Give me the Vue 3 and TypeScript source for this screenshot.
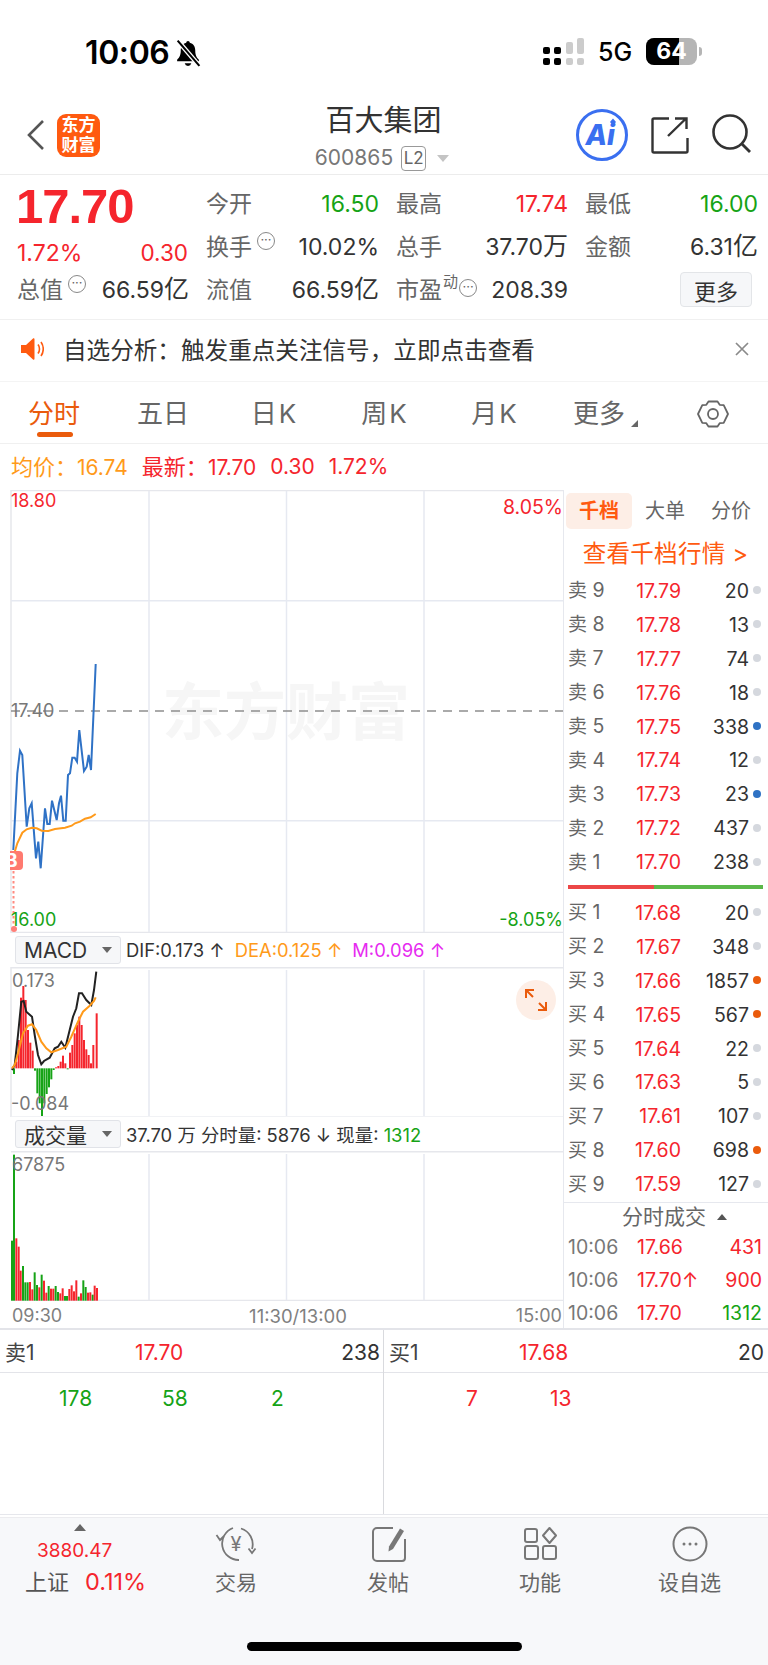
<script setup lang="ts">
const RED = '#f5252d'
const GREEN = '#16a316'

const toLine = (pts: number[][], ox: number, oy: number): string =>
  pts.map(([x, y]) => `${(ox + x / 3).toFixed(1)},${(oy + y / 3).toFixed(1)}`).join(' ')

const priceLine = toLine([[40,1110],[52,880],[60,812],[67,825],[80,1040],[88,985],[95,970],[108,1135],[115,1085],[122,1165],[135,985],[142,1032],[149,1032],[156,962],[170,1020],[177,970],[183,947],[190,1022],[197,1022],[204,885],[210,880],[217,833],[224,833],[231,845],[238,750],[252,873],[260,860],[266,825],[273,870],[287,552]], 0, 480)
const avgLine = toLine([[40,1130],[52,1090],[67,1058],[80,1048],[95,1043],[110,1045],[125,1052],[145,1053],[165,1047],[195,1043],[215,1037],[225,1030],[240,1025],[255,1016],[272,1012],[287,1002]], 0, 480)
const difLine = toLine([[12,315],[20,300],[30,210],[40,110],[47,108],[55,140],[72,155],[80,210],[90,270],[100,298],[108,288],[125,278],[140,250],[150,245],[160,230],[172,248],[185,195],[195,155],[205,130],[213,85],[222,85],[235,105],[250,120],[258,75],[265,20]], 8, 965)
const deaLine = toLine([[12,310],[20,300],[30,265],[45,205],[60,182],[72,178],[85,195],[100,230],[115,250],[130,262],[150,255],[175,245],[190,215],[210,170],[225,140],[245,122],[258,108],[263,97]], 8, 965)

// MACD bars: [x in 3x crop, y of the tip in 3x crop]; 415 is the zero line.
const macdRaw: number[][] = [[42,432],[49,395],[56,330],[63,203],[70,168],[77,210],[84,300],[91,338],[98,362],[105,422],[112,490],[119,520],[126,558],[133,520],[140,492],[147,472],[154,448],[161,420],[168,412],[175,408],[182,395],[189,377],[196,400],[203,418],[210,368],[217,345],[224,310],[231,285],[238,260],[245,285],[252,330],[259,358],[266,375],[273,400],[280,345],[290,250]]
const macdBars = macdRaw.map(([x, y]) => {
  const base = 930 + 415 / 3
  const tip = 930 + y / 3
  return { x: x / 3 - 1, y: Math.min(base, tip), h: Math.abs(tip - base), c: y > 415 ? GREEN : RED }
})

// Volume bars: [x, top, 1 for green] in the 3x crop at (8,1150); 452 is the floor.
const volRaw: number[][] = [[12,272,1],[18,14,1],[25,265,0],[32,290,0],[38,362,0],[45,348,1],[52,397,1],[59,397,1],[66,396,0],[73,418,0],[80,367,1],[87,405,1],[94,412,0],[101,374,1],[108,392,0],[115,428,0],[122,408,1],[129,416,0],[136,416,0],[143,408,1],[150,426,1],[157,430,0],[164,415,0],[171,438,1],[177,438,1],[184,417,0],[191,406,0],[198,424,0],[205,391,0],[212,440,1],[219,430,0],[226,391,1],[233,411,1],[240,428,0],[247,427,0],[254,434,1],[260,407,0],[267,414,0]]
const volBars = volRaw.map(([x, y, g]) => ({
  x: 8 + x / 3 - 1,
  y: 1150 + y / 3,
  h: (452 - y) / 3,
  c: g ? GREEN : RED,
}))

const gridX = [149, 286.5, 424]
const quoteRows = [
  [
    { label: '今开', value: '16.50', unit: '', color: 'green' },
    { label: '最高', value: '17.74', unit: '', color: 'red' },
    { label: '最低', value: '16.00', unit: '', color: 'green' },
  ],
  [
    { label: '换手', value: '10.02%', unit: '', color: '', dots: true },
    { label: '总手', value: '37.70', unit: '万', color: '' },
    { label: '金额', value: '6.31', unit: '亿', color: '' },
  ],
]
const tabs = ['五日', '日K', '周K', '月K']

interface Level { name: string; n: string; price: string; qty: string; dot: string }
const dotOf = (k: string): string => (k === 'b' ? 'blue' : k === 'o' ? 'orange' : 'gray')
const mk = (name: string, raw: [string, string, string, string][]): Level[] =>
  raw.map(([n, price, qty, d]) => ({ name, n, price, qty, dot: dotOf(d) }))
const sells = mk('卖', [['9','17.79','20','g'],['8','17.78','13','g'],['7','17.77','74','g'],['6','17.76','18','g'],['5','17.75','338','b'],['4','17.74','12','g'],['3','17.73','23','b'],['2','17.72','437','g'],['1','17.70','238','g']])
const buys = mk('买', [['1','17.68','20','g'],['2','17.67','348','g'],['3','17.66','1857','o'],['4','17.65','567','o'],['5','17.64','22','g'],['6','17.63','5','g'],['7','17.61','107','g'],['8','17.60','698','o'],['9','17.59','127','g']])
const trades = [
  { p: '17.66', q: '431', c: 'red' },
  { p: '17.70↑', q: '900', c: 'red' },
  { p: '17.70', q: '1312', c: 'green' },
]
</script>

<template>
  <div class="page">
    <div class="status">
      <div class="time-wrap">
        <span class="time">10:06</span>
        <svg class="bell" width="28" height="29" viewBox="0 0 26 28">
          <path d="M13 2c-1 0-1.600.7-1.700 1.600C7.800 4.500 6 7.400 6 11c0 4.500-1.200 6.500-3.500 9v1.500h21V20C21.200 17.500 20 15.500 20 11c0-3.600-1.800-6.500-5.300-7.400C14.600 2.700 14 2 13 2z" fill="#000" />
          <path d="M9.800 23.500a3.300 3.300 0 0 0 6.400 0z" fill="#000" />
          <path d="M3 1.500 L24 26" stroke="#fff" stroke-width="4.500" />
          <path d="M3 1.500 L24 26" stroke="#000" stroke-width="2" />
        </svg>
      </div>
      <div class="status-right">
        <div class="signal">
          <div class="sig-col"><i class="s1 on"></i><i class="s2 on"></i></div>
          <div class="sig-col"><i class="s1 on"></i><i class="s2 on"></i></div>
          <div class="sig-col"><i class="s3"></i><i class="s2"></i></div>
          <div class="sig-col"><i class="s4"></i><i class="s2"></i></div>
        </div>
        <span class="net">5G</span>
        <div class="battery"><span class="batt-level"></span><span class="batt-num">64</span></div>
        <i class="batt-tip"></i>
      </div>
    </div>

    <header class="nav">
      <div class="nav-left">
        <svg width="20" height="32" viewBox="0 0 20 32"><path d="M17 2 3 16l14 14" fill="none" stroke="#555" stroke-width="2.600" /></svg>
        <div class="logo"><span>东方</span><span>财富</span></div>
      </div>
      <div class="nav-title">
        <div class="title">百大集团</div>
        <div class="code"><span>600865</span><span class="l2">L2</span><i class="code-tri"></i></div>
      </div>
      <div class="nav-right">
        <svg class="ai" width="54" height="54" viewBox="0 0 54 54">
          <circle cx="27" cy="27" r="24.500" fill="none" stroke="#3a6ff0" stroke-width="3" />
          <text x="10.500" y="37" class="ai-text">Ai</text>
          <path d="M38 10.500l3 3.500-3 3.500-3-3.500z" fill="#3a6ff0" />
        </svg>
        <svg width="38" height="38" viewBox="0 0 38 38">
          <path d="M18 2.500H3a1.500 1.500 0 0 0-1.500 1.500v31a1.500 1.500 0 0 0 1.500 1.500h32a1.500 1.500 0 0 0 1.500-1.500V22" fill="none" stroke="#333" stroke-width="2.400" />
          <path d="M17 20 35 2.500M24 2.500h11.500V13" fill="none" stroke="#333" stroke-width="2.400" />
        </svg>
        <svg width="42" height="42" viewBox="0 0 42 42">
          <circle cx="19" cy="18" r="16.500" fill="none" stroke="#333" stroke-width="2.600" />
          <path d="M31 30l8 8" stroke="#333" stroke-width="2.800" />
        </svg>
      </div>
    </header>

    <section class="quote">
      <div class="big red">17.70</div>
      <template v-for="item in quoteRows[0]" :key="item.label">
        <div class="cell">
          <span class="lbl">{{ item.label }}</span>
          <span class="val" :class="item.color">{{ item.value }}</span>
        </div>
      </template>
      <div class="cell low red"><span class="low-a">1.72%</span><span>0.30</span></div>
      <template v-for="item in quoteRows[1]" :key="item.label">
        <div class="cell">
          <span class="lbl">{{ item.label }}<i v-if="item.dots" class="more-dot">···</i></span>
          <span class="val">{{ item.value }}<span class="unit">{{ item.unit }}</span></span>
        </div>
      </template>
      <div class="cell">
        <span class="lbl">总值<i class="more-dot">···</i></span><span class="val">66.59<span class="unit">亿</span></span>
      </div>
      <div class="cell"><span class="lbl">流值</span><span class="val">66.59<span class="unit">亿</span></span></div>
      <div class="cell">
        <span class="lbl">市盈<sup class="dyn">动</sup><i class="more-dot tight">···</i></span><span class="val">208.39</span>
      </div>
      <div class="cell end"><button class="more-btn">更多</button></div>
    </section>

    <section class="notice">
      <svg width="24" height="26" viewBox="0 0 24 26">
        <path d="M1 9h5l7-6.500c.8-.7 1.500-.3 1.500.7v19.600c0 1-.7 1.400-1.500.7L6 17H1z" fill="#ff5a10" />
        <path d="M18 8.500c2 2.500 2 6.500 0 9M21 6c3 4 3 10 0 14" fill="none" stroke="#ff5a10" stroke-width="1.600" />
      </svg>
      <span class="notice-text">自选分析：触发重点关注信号，立即点击查看</span>
      <svg width="16" height="16" viewBox="0 0 16 16"><path d="M2 2l12 12M14 2 2 14" stroke="#8a8a8a" stroke-width="1.700" /></svg>
    </section>

    <nav class="tabs">
      <div class="tab active">分时<i class="tab-bar"></i></div>
      <div v-for="t in tabs" :key="t" class="tab wide">{{ t }}</div>
      <div class="tab more-tab">更多<i class="corner"></i></div>
      <div class="tab gear">
        <svg width="32" height="32" viewBox="0 0 32 32">
          <path d="M11.500 3.500h9l2.200 3.300 4 .3 4.300 8.900-4.300 8.900-4 .3-2.200 3.300h-9l-2.200-3.300-4-.3L1 16l4.300-8.900 4-.3z" fill="none" stroke="#666" stroke-width="1.800" stroke-linejoin="round" />
          <circle cx="16" cy="16" r="5" fill="none" stroke="#666" stroke-width="1.800" />
        </svg>
      </div>
    </nav>

    <div class="summary">
      <span class="orange"><span class="sum-l">均价：</span>16.74</span>
      <span class="red"><span class="sum-l">最新：</span>17.70</span>
      <span class="red">0.30</span>
      <span class="red">1.72%</span>
    </div>

    <div class="market">
      <div class="charts">
        <div class="pane main-pane">
          <svg width="563" height="443" viewBox="0 490 563 443">
            <text x="162" y="735" class="wm">东方财富</text>
            <path d="M11 490.500H563M11 932.500H563M11 490V933" stroke="#e6e7ec" stroke-width="1.500" />
            <path v-for="x in gridX" :key="x" :d="`M${x} 491V932`" stroke="#e6e9f1" stroke-width="1.500" />
            <path d="M11 600.700H563M11 820.700H563" stroke="#e6e9f1" stroke-width="1.500" />
            <path d="M11 711H563" stroke="#8e8e8e" stroke-width="1.500" stroke-dasharray="9 7" />
            <polyline :points="priceLine" fill="none" stroke="#2f72c6" stroke-width="2" />
            <polyline :points="avgLine" fill="none" stroke="#ff9a1a" stroke-width="2" />
            <path d="M13.500 871V926" stroke="#ff8a80" stroke-width="2" stroke-dasharray="2.500 2.500" />
            <circle cx="14" cy="929" r="3" fill="#ff7f78" />
          </svg>
          <span class="ax tl red">18.80</span>
          <span class="ax tr red">8.05%</span>
          <span class="ax mid">17.40</span>
          <span class="ax bl green">16.00</span>
          <span class="ax br green">-8.05%</span>
          <span class="buy-mark">B</span>
        </div>

        <div class="sel-bar">
          <div class="sel"><span class="sel-name macd">MACD</span><i class="sel-tri"></i></div>
          <span>DIF:0.173 ↑</span>
          <span class="orange sp-l">DEA:0.125 ↑</span>
          <span class="magenta sp-l">M:0.096 ↑</span>
        </div>

        <div class="pane macd-pane">
          <svg width="563" height="150" viewBox="0 967 563 150">
            <path d="M11 967.800H563M11 967V1117" stroke="#e6e7ec" stroke-width="1.500" />
            <path d="M11 1116.700H563" stroke="#eeeff3" stroke-width="1" />
            <path v-for="x in gridX" :key="x" :d="`M${x} 970V1116`" stroke="#e6e9f1" stroke-width="1.500" />
            <rect v-for="b in macdBars" :key="b.x" :x="b.x" :y="b.y" width="2" :height="b.h" :fill="b.c" />
            <polyline :points="difLine" fill="none" stroke="#222" stroke-width="2" />
            <polyline :points="deaLine" fill="none" stroke="#ff9a1a" stroke-width="2" />
          </svg>
          <span class="ax m-top">0.173</span>
          <span class="ax m-bot">-0.084</span>
          <div class="expand">
            <svg width="24" height="24" viewBox="0 0 24 24">
              <path d="M2 10V2h8M2 2l7 7M22 14v8h-8M22 22l-7-7" fill="none" stroke="#ea5b0c" stroke-width="2" />
            </svg>
          </div>
        </div>

        <div class="sel-bar">
          <div class="sel"><span class="sel-name">成交量</span><i class="sel-tri"></i></div>
          <span>37.70 万 分时量: 5876 ↓ 现量: <span class="green">1312</span></span>
        </div>

        <div class="pane vol-pane">
          <svg width="563" height="150" viewBox="0 1151 563 150">
            <path d="M11 1151.800H563M11 1300.500H563" stroke="#e6e7ec" stroke-width="1.500" />
            <path v-for="x in gridX" :key="x" :d="`M${x} 1154V1300`" stroke="#e6e9f1" stroke-width="1.500" />
            <rect v-for="b in volBars" :key="b.x" :x="b.x" :y="b.y" width="2" :height="b.h" :fill="b.c" />
          </svg>
          <span class="ax v-top">67875</span>
        </div>

        <div class="time-axis">
          <span>09:30</span><span class="ta-mid">11:30/13:00</span><span>15:00</span>
        </div>
      </div>

      <aside class="book">
        <div class="book-tabs">
          <span class="bt active">千档</span><span class="bt">大单</span><span class="bt">分价</span>
        </div>
        <div class="book-link">查看千档行情 &gt;</div>
        <div v-for="r in sells" :key="r.name + r.n" class="lv">
          <span class="lv-n"><b>{{ r.name }}</b> {{ r.n }}</span>
          <span class="lv-p">{{ r.price }}</span>
          <span class="lv-q">{{ r.qty }}</span>
          <i class="dot" :class="r.dot"></i>
        </div>
        <div class="ratio"><i class="ratio-r"></i><i class="ratio-g"></i></div>
        <div v-for="r in buys" :key="r.name + r.n" class="lv">
          <span class="lv-n"><b>{{ r.name }}</b> {{ r.n }}</span>
          <span class="lv-p">{{ r.price }}</span>
          <span class="lv-q">{{ r.qty }}</span>
          <i class="dot" :class="r.dot"></i>
        </div>
        <div class="tr-head">分时成交<i class="tr-tri"></i></div>
        <div v-for="(t, i) in trades" :key="i" class="tr">
          <span class="tr-t">10:06</span>
          <span class="tr-p red">{{ t.p }}</span>
          <span class="tr-q" :class="t.c">{{ t.q }}</span>
        </div>
      </aside>
    </div>

    <section class="detail">
      <div class="d-col">
        <div class="d-head"><span class="d-n">卖1</span><span class="red d-p">17.70</span><span class="d-q">238</span></div>
        <div class="d-body green"><span class="a1">178</span><span class="a2">58</span><span class="a3">2</span></div>
      </div>
      <div class="d-col right">
        <div class="d-head"><span class="d-n">买1</span><span class="red d-p">17.68</span><span class="d-q">20</span></div>
        <div class="d-body red"><span class="b1">7</span><span class="b2">13</span></div>
      </div>
    </section>

    <footer class="foot">
      <div class="foot-row">
        <div class="index">
          <i class="idx-tri"></i>
          <div class="idx-val red">3880.47</div>
          <div class="idx-line"><span>上证</span><span class="red idx-pct">0.11%</span></div>
        </div>
        <div class="fn">
          <svg width="42" height="38" viewBox="0 0 42 38">
            <path d="M18 3A16.500 16.500 0 0 0 24 35M26 3.500A16.500 16.500 0 0 1 37 24M1.500 10l3.500 5 4-4M33.500 23.500l3.500 4.500 3.500-4.500" fill="none" stroke="#777" stroke-width="1.800" />
            <text x="21" y="26" text-anchor="middle" class="yen">¥</text>
          </svg>
          <span>交易</span>
        </div>
        <div class="fn">
          <svg width="38" height="38" viewBox="0 0 38 38">
            <path d="M24 3H8a4 4 0 0 0-4 4v25a4 4 0 0 0 4 4h25a3 3 0 0 0 3-3V14" fill="none" stroke="#777" stroke-width="2" />
            <path d="M31 3.500l4 2.500-11 18-4.500 2.500.5-5z" fill="#777" />
          </svg>
          <span>发帖</span>
        </div>
        <div class="fn">
          <svg width="38" height="38" viewBox="0 0 38 38">
            <g fill="none" stroke="#777" stroke-width="2">
              <rect x="4" y="4" width="12" height="13" rx="2" />
              <rect x="4" y="21" width="13" height="13" rx="2" />
              <rect x="22" y="21" width="13" height="13" rx="2" />
              <path d="M28.500 3l6.500 7.500-6.500 7.500-6.500-7.500z" stroke-linejoin="round" />
            </g>
          </svg>
          <span>功能</span>
        </div>
        <div class="fn">
          <svg width="38" height="38" viewBox="0 0 38 38">
            <circle cx="19" cy="19" r="16.500" fill="none" stroke="#777" stroke-width="2" />
            <circle cx="13" cy="19" r="1.500" fill="#777" /><circle cx="19" cy="19" r="1.500" fill="#777" /><circle cx="25" cy="19" r="1.500" fill="#777" />
          </svg>
          <span>设自选</span>
        </div>
      </div>
      <i class="home"></i>
    </footer>
  </div>
</template>

<style>
html, body { margin: 0; background: #fff; }
</style>

<style scoped>
.page {
  width: 768px; height: 1665px; overflow: hidden; background: #fff; color: #333;
  font-family: Inter, "Noto Sans CJK SC", sans-serif;
  display: flex; flex-direction: column;
}
i { display: block; font-style: normal; }
.red { color: #f5252d; }
.green { color: #16a316; }
.orange { color: #ff9a1a; }
.magenta { color: #e62bf0; }

.status { height: 105px; display: flex; justify-content: space-between; align-items: flex-start; box-sizing: border-box; padding: 34px 66px 0 85px; }
.time-wrap { display: flex; align-items: center; gap: 5px; }
.time { font: 600 32px/38px Inter, sans-serif; color: #000; letter-spacing: -.4px; }
.status-right { display: flex; align-items: center; height: 29px; margin-top: 3px; }
.signal { display: flex; gap: 4.500px; margin-right: 14px; }
.sig-col { display: flex; flex-direction: column; justify-content: flex-end; gap: 4px; height: 27px; }
.sig-col i { width: 7px; border-radius: 2px; background: #ccc; }
.sig-col i.on { background: #000; }
.s1 { height: 7px; }
.s2 { height: 7px; }
.s3 { height: 12px; }
.s4 { height: 16px; }
.net { font: 500 25px/28px Inter, sans-serif; color: #000; width: 48px; }
.battery { position: relative; width: 51px; height: 27px; border-radius: 8px; background: #b5b5b5; overflow: hidden; }
.batt-level { position: absolute; left: 0; top: 0; bottom: 0; width: 33px; background: #000; }
.batt-num { position: absolute; inset: 0; text-align: center; font: 700 23px/27px Inter, sans-serif; color: #fff; }
.batt-tip { width: 3px; height: 9px; margin-left: 2px; border-radius: 0 3px 3px 0; background: #b5b5b5; }

.nav { height: 70px; box-sizing: border-box; border-bottom: 1.500px solid #ececec; display: grid; grid-template-columns: 1fr auto 1fr; padding: 0 15px 0 26px; }
.nav-left { display: flex; align-items: center; gap: 11px; padding-bottom: 9px; }
.logo { width: 43px; height: 43px; border-radius: 9px; background: #ff5a10; color: #fff; display: flex; flex-direction: column; align-items: center; justify-content: center; font-size: 17px; line-height: 20px; font-weight: 700; }
.nav-title { display: flex; flex-direction: column; align-items: center; transform: translateX(-6px); }
.title { font-size: 29px; line-height: 32px; color: #333; }
.code { display: flex; align-items: center; font-size: 21px; line-height: 28px; color: #777; margin: 7px 3px 0 0; }
.l2 { margin-left: 8px; width: 25px; height: 25px; box-sizing: border-box; border: 1px solid #999; border-radius: 4px; font-size: 17px; line-height: 23px; text-align: center; color: #666; }
.code-tri { margin-left: 11px; border-left: 6px solid transparent; border-right: 6px solid transparent; border-top: 7px solid #c4c4c4; }
.nav-right { display: flex; justify-content: flex-end; align-items: center; gap: 22px; padding-bottom: 9px; }
.ai-text { font: italic 800 28px Inter, sans-serif; fill: #3a6ff0; }

.quote { height: 145px; box-sizing: border-box; border-bottom: 1.500px solid #f0f0f0; padding: 7px 11px 0 17px; display: grid; grid-template-columns: 171px 172px 171px 172px; column-gap: 18px; grid-template-rows: 43px 43px 43px; align-items: center; }
.big { font: 700 49px/50px "Liberation Sans", sans-serif; letter-spacing: -1px; margin: 5px 0 0 -1px; }
.cell { display: flex; justify-content: space-between; align-items: center; font-size: 23px; line-height: 30px; }
.cell.low { font-size: 22.500px; margin-top: 12px; }
.low-a { font-size: 23px; }
.cell.end { justify-content: flex-end; padding-right: 5px; }
.lbl { font-size: 23px; color: #666; display: flex; align-items: center; position: relative; }
.val { color: #333; margin-right: -1px; }
.unit { font-size: 25px; }
.val.green { color: #16a316; }
.val.red { color: #f5252d; }
.more-dot { width: 18px; height: 18px; box-sizing: border-box; border: 1px solid #888; border-radius: 50%; font-size: 13px; line-height: 13px; text-align: center; color: #666; margin: -12px 0 0 5px; }
.more-dot.tight { margin-left: 1px; margin-top: -4px; }
.dyn { font-size: 15px; line-height: 15px; margin: -16px 0 0 1px; vertical-align: baseline; }
.more-btn { width: 72px; height: 35px; padding: 0; background: #f6f7f9; border: 1px solid #e3e5e8; border-radius: 4px; font: 22px Inter, "Noto Sans CJK SC", sans-serif; color: #333; }

.notice { height: 62px; box-sizing: border-box; border-bottom: 1.500px solid #f4f4f4; display: flex; align-items: center; padding: 0 18px 4px 20px; }
.notice-text { margin-left: 19px; font-size: 23.600px; color: #333; flex: 1; }

.tabs { height: 62px; box-sizing: border-box; border-bottom: 1.500px solid #f0f0f0; position: relative; display: grid; grid-template-columns: 108px 110px 111px 110px 110px 100px 1fr; }
.tab { font-size: 26px; color: #666; text-align: center; line-height: 60px; position: relative; padding-top: 2px; }
.tab.wide + .tab.wide { letter-spacing: 2px; padding-left: 2px; }
.tab.active { color: #ea5b0c; }
.tab-bar { position: absolute; left: 37px; top: 50px; width: 36px; height: 5px; border-radius: 3px; background: #ea5b0c; }
.corner { position: absolute; right: 11px; top: 38px; border-left: 7px solid transparent; border-bottom: 7px solid #666; }
.gear { display: flex; justify-content: center; align-items: center; padding: 2px 0 0 8px; }

.summary { height: 46px; font-size: 21px; line-height: 46px; padding-left: 11px; display: flex; gap: 14px; }
.sum-l { font-size: 22px; }

.market { height: 838px; display: flex; }
.charts { width: 563px; flex: none; }
.pane { position: relative; }
.pane svg { display: block; }
.main-pane { height: 443px; }
.macd-pane { height: 150px; }
.vol-pane { height: 150px; }
.wm { font: 700 62px "Noto Sans CJK SC", sans-serif; fill: #f6f6f6; }
.ax { position: absolute; font-size: 18px; line-height: 20px; color: #777; }
.ax.red { color: #f5252d; }
.ax.green { color: #16a316; }
.tl { left: 11px; top: 1px; }
.tr { right: 0; top: 0; }
.mid { left: 11px; top: 211px; }
.bl { left: 11px; top: 420px; }
.br { right: 0; top: 420px; }
.buy-mark { position: absolute; left: 10px; top: 361px; width: 13px; height: 19px; background: #ff7a70; border-radius: 0 4px 4px 0; color: #fff; font-size: 19px; line-height: 19px; font-weight: 700; overflow: hidden; text-indent: -5px; }
.sel-bar { height: 34px; box-sizing: border-box; padding: 3px 0 3px 15px; display: flex; align-items: center; font-size: 18.400px; color: #333; white-space: nowrap; }
.sel { width: 106px; height: 28px; box-sizing: border-box; background: #f6f7f9; border: 1px solid #e1e3e8; border-radius: 3px; display: flex; align-items: center; justify-content: space-between; padding: 0 8px 0 8px; margin-right: 5px; flex: none; }
.sel-name { font-size: 21px; color: #333; }
.sel-tri { border-left: 5px solid transparent; border-right: 5px solid transparent; border-top: 6px solid #666; }
.sp-l { margin-left: 10px; }
.m-top { left: 12px; top: 4px; }
.m-bot { left: 11px; top: 127px; }
.v-top { left: 12px; top: 4px; }
.expand { position: absolute; right: 7px; top: 13px; width: 40px; height: 40px; border-radius: 50%; background: #fdeee6; display: flex; align-items: center; justify-content: center; }
.time-axis { height: 27px; box-sizing: border-box; padding: 0 1px 0 12px; display: flex; justify-content: space-between; font-size: 18px; line-height: 30px; color: #808080; }
.ta-mid { margin-left: 18px; font-size: 18.500px; }

.book { width: 205px; border-left: 1.500px solid #e6e8ee; box-sizing: border-box; }
.book-tabs { height: 45px; display: flex; padding: 3px 0 0 2px; box-sizing: border-box; }
.bt { width: 66px; height: 36px; line-height: 36px; text-align: center; font-size: 20px; color: #666; border-radius: 5px; }
.bt.active { background: #fdeee6; color: #ff5a10; font-weight: 700; }
.book-link { height: 39px; line-height: 37px; font-size: 23.500px; letter-spacing: .3px; color: #ff5a10; text-align: center; margin-left: -1px; white-space: nowrap; }
.lv { height: 33.900px; display: flex; align-items: center; font-size: 19.500px; line-height: 24px; position: relative; padding-left: 4px; }
.lv-n { width: 64px; color: #666; white-space: nowrap; }
.lv-n b { font-weight: 400; font-size: 19px; }
.lv-p { width: 49px; text-align: right; color: #f5252d; }
.lv-q { width: 68px; text-align: right; color: #333; }
.dot { width: 8px; height: 8px; border-radius: 50%; margin-left: 4px; margin-top: -1px; }
.dot.gray { background: #d5d8de; }
.dot.blue { background: #2f72c4; }
.dot.orange { background: #ea5b0c; }
.ratio { height: 17px; display: flex; padding: 6px 5px 7px 4px; box-sizing: border-box; }
.ratio-r { width: 86px; height: 4px; background: #ec4747; }
.ratio-g { flex: 1; height: 4px; background: #5bb84a; }
.tr-head { height: 28px; margin-top: 1px; box-sizing: border-box; border-top: 1.500px solid #e6e8ee; font-size: 21px; line-height: 27px; color: #666; padding-left: 58px; position: relative; }
.tr-tri { position: absolute; left: 153px; top: 11px; border-left: 5px solid transparent; border-right: 5px solid transparent; border-bottom: 6px solid #555; }
.tr { height: 33px; display: flex; align-items: center; font-size: 19.500px; padding-left: 4px; }
.tr-t { width: 69px; color: #777; }
.tr-p { width: 70px; white-space: nowrap; }
.tr-q { width: 55px; text-align: right; }

.detail { height: 187px; box-sizing: border-box; border-top: 2px solid #e3e4e9; border-bottom: 1px solid #e6e7ec; display: flex; }
.d-col { width: 383px; position: relative; flex: none; }
.d-col.right { flex: 1; width: auto; border-left: 1.500px solid #d9dade; }
.d-head { height: 43px; box-sizing: border-box; border-bottom: 1.500px solid #e3e4e9; font-size: 21px; line-height: 46px; display: flex; padding: 0 3px 0 5px; position: relative; }
.d-n { color: #444; }
.d-p { position: absolute; left: 135px; }
.d-q { margin-left: auto; }
.right .d-head { padding-left: 5px; padding-right: 4px; }
.d-body { position: relative; font-size: 21px; line-height: 50px; }
.d-body span { position: absolute; top: 1px; }
.a1 { left: 59px; }
.a2 { left: 162px; }
.a3 { left: 271px; }
.b1 { left: 82px; }
.b2 { left: 166px; }

.foot { flex: 1; background: #f7f8fa; border-top: 1.500px solid #ececef; margin-top: 2px; position: relative; }
.foot-row { display: grid; grid-template-columns: 160px 152px 152px 152px 147px; margin-top: -2px; }
.index { position: relative; height: 90px; }
.idx-tri { position: absolute; left: 74px; top: 8px; border-left: 6.500px solid transparent; border-right: 6.500px solid transparent; border-bottom: 7px solid #666; }
.idx-val { position: absolute; left: 37px; top: 23px; font-size: 19px; line-height: 24px; }
.idx-line { position: absolute; left: 25px; top: 52px; font-size: 22px; line-height: 28px; display: flex; gap: 16px; color: #555; white-space: nowrap; }
.idx-pct { font-size: 23.500px; }
.fn { display: flex; flex-direction: column; align-items: center; font-size: 21px; color: #666; padding-top: 9px; }
.fn span { line-height: 28px; margin-top: 6px; }
.yen { font: 400 20px Inter, sans-serif; fill: #777; }
.home { position: absolute; left: 247px; top: 124px; width: 275px; height: 9px; border-radius: 5px; background: #000; }
</style>
